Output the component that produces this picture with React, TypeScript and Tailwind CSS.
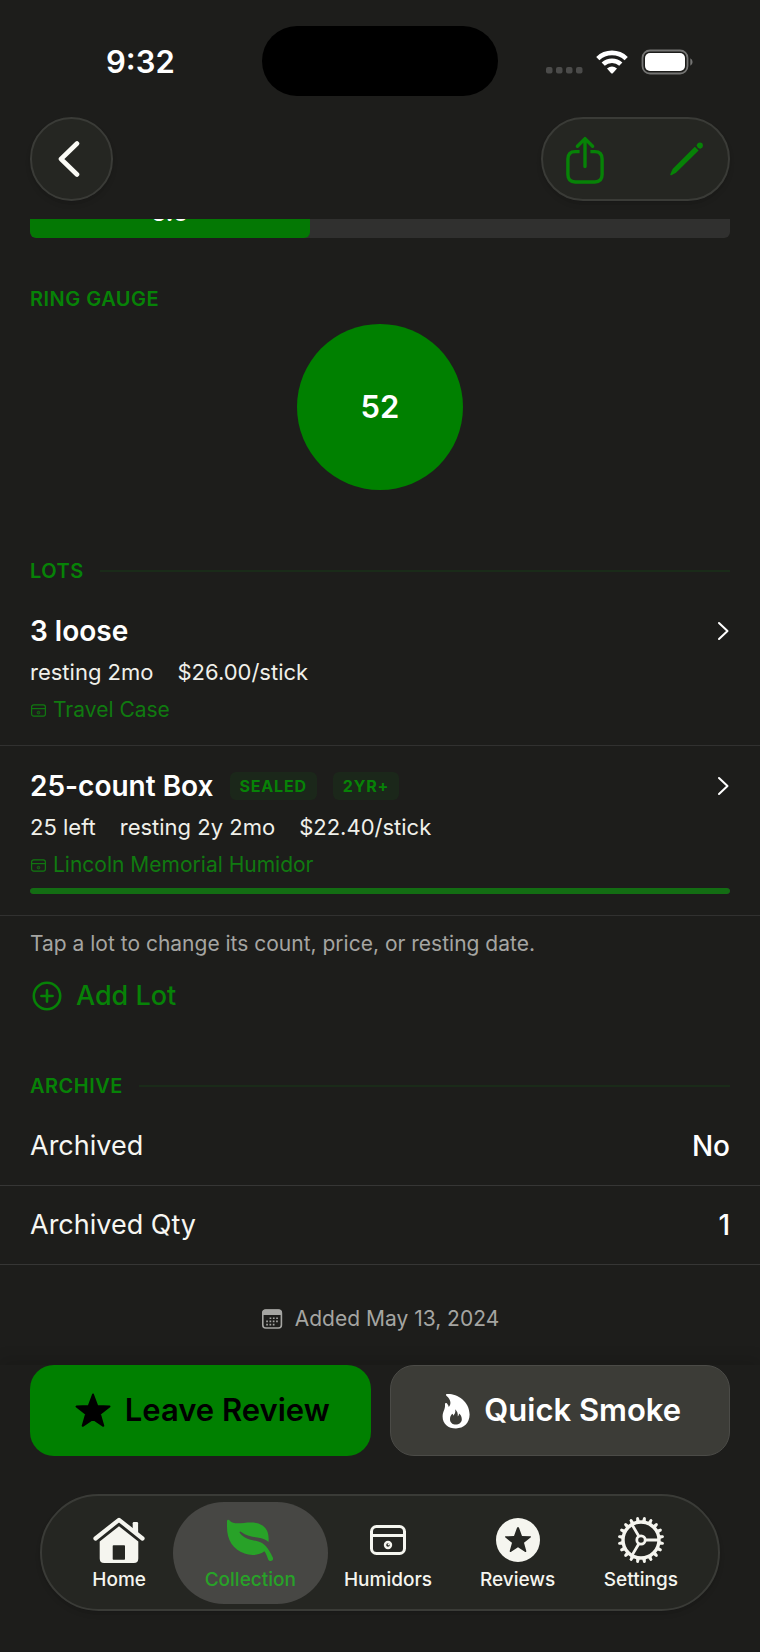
import React, { useState } from 'react';

const lots = [
  {
    title: '3 loose',
    tags: [] as string[],
    facts: ['resting 2mo', '$26.00/stick'],
    humidor: 'Travel Case',
  },
  {
    title: '25-count Box',
    tags: ['SEALED', '2YR+'],
    facts: ['25 left', 'resting 2y 2mo', '$22.40/stick'],
    humidor: 'Lincoln Memorial Humidor',
    remaining: 100,
  },
];

const archive = [
  { label: 'Archived', value: 'No' },
  { label: 'Archived Qty', value: '1' },
];

const STAR = 'M18 1.5 L22.3 13 L34.5 13.5 L24.9 21 L28.3 32.8 L18 26 L7.7 32.8 L11.1 21 L1.5 13.5 L13.7 13 Z';

function HumidorIcon({ className, strokeWidth = 3 }: { className: string; strokeWidth?: number }) {
  return (
    <svg viewBox="0 0 36 30" fill="none" className={className} stroke="currentColor" strokeWidth={strokeWidth}>
      <rect x="1.5" y="1.5" width="33" height="27" rx="5" />
      <path d="M1.5 10.5H34.5" />
      <circle cx="18" cy="20" r="3" strokeWidth="2.4" />
      <path d="M18 20L19.6 18.4" strokeWidth="1.4" />
    </svg>
  );
}

function HomeIcon() {
  return (
    <svg viewBox="0 0 52 46" className="w-[52px] h-[46px]" fill="currentColor">
      <path d="M2.5 21.5L26 2.8L49.5 21.5" fill="none" stroke="currentColor" strokeWidth="4.2" strokeLinecap="round" strokeLinejoin="round" />
      <path d="M39.7 12V6.2Q39.7 5 40.9 5H43.9Q45.1 5 45.1 6.2V17Z" />
      <path fillRule="evenodd" d="M26 9.2L45.3 24.6V41.5Q45.3 46 40.8 46H11.2Q6.7 46 6.7 41.5V24.6ZM20.5 28.2Q19.7 28.2 19.7 29V42Q19.7 42.8 20.5 42.8H31.2Q32 42.8 32 42V29Q32 28.2 31.2 28.2Z" />
    </svg>
  );
}

function LeafIcon() {
  return (
    <svg viewBox="0 0 48 42" className="w-[48px] h-[42px]" fill="currentColor">
      <path d="M1 2.3C1 .6 2.6.3 3.6 1.5C6.4 4.8 11.5 4.6 18 4C25 3.4 31.5 3 36.5 6.6C41.5 10.2 43.2 15.5 42.5 23C40.8 21.2 38.2 19.8 34.2 18.9C29 17.8 22 18.2 14.8 12.8C14 12.2 13.2 13.2 13.8 14C18.6 20.4 25.6 20.8 31.4 22.2C38.2 23.8 42.2 28.4 46.8 38.5C48.2 41.8 43.6 43.2 42.2 40.4C41 37.6 40.4 35 38.4 32.3C33.6 36.4 25 37 18.6 34.6C7 30.6 1 21 1 8Z" />
    </svg>
  );
}

function ReviewsIcon() {
  return (
    <svg viewBox="0 0 44 44" className="w-[44px] h-[44px]" fill="currentColor">
      <path
        fillRule="evenodd"
        strokeLinejoin="round"
        d="M22 0A22 22 0 1 1 22 44A22 22 0 1 1 22 0ZM21 9.8L18 18L9.6 18.3Q8.4 18.6 9.4 19.6L16 24.8L13.7 33.1Q13.6 34.5 14.8 33.9L22 29.2L29.2 33.9Q30.4 34.5 30.3 33.1L28 24.8L34.6 19.6Q35.6 18.6 34.4 18.3L26 18L23 9.8Q22 8.4 21 9.8Z"
      />
    </svg>
  );
}

function SettingsIcon() {
  const teeth = Array.from({ length: 20 }, (_, i) => i * 18 + 9);
  return (
    <svg viewBox="0 0 48 48" className="w-[48px] h-[48px]" fill="none" stroke="currentColor">
      <circle cx="24" cy="24" r="18" strokeWidth="3.4" />
      {teeth.map((deg) => (
        <path key={deg} d="M22 6L22.7 1.4Q24 0 25.3 1.4L26 6Z" fill="currentColor" stroke="none" transform={`rotate(${deg} 24 24)`} />
      ))}
      <circle cx="24" cy="24" r="4.2" strokeWidth="2.8" />
      <path d="M28.5 24H41.5M21.7 20L15 8.6M21.7 28L15 39.4" strokeWidth="2.8" />
    </svg>
  );
}

const tabs = [
  { name: 'Home', icon: <HomeIcon /> },
  { name: 'Collection', icon: <LeafIcon /> },
  { name: 'Humidors', icon: <HumidorIcon className="w-[36px] h-[30px]" /> },
  { name: 'Reviews', icon: <ReviewsIcon /> },
  { name: 'Settings', icon: <SettingsIcon /> },
];

function StatusBar() {
  return (
    <div className="grid grid-cols-[1fr_236px_1fr] h-[117px] pt-[26px] items-start">
      <div className="h-[72px] flex items-center pl-[106px] text-[31px] font-semibold">9:32</div>
      <div className="h-[70px] rounded-full bg-black" />
      <div className="h-[72px] flex items-center justify-end pr-[67px] gap-[13px]">
        <svg viewBox="0 0 37 24" className="w-[37px] h-[24px]" fill="#4b4b4a">
          <rect x="0" y="17" width="6.5" height="6.5" rx="2" />
          <rect x="10" y="17" width="6.5" height="6.5" rx="2" />
          <rect x="20" y="17" width="6.5" height="6.5" rx="2" />
          <rect x="30" y="17" width="6.5" height="6.5" rx="2" />
        </svg>
        <svg viewBox="0 0 32 24" className="w-[32px] h-[24px]" fill="none" stroke="#fff" strokeWidth="4.6">
          <path d="M1.8 8.6A20.5 20.5 0 0 1 30.2 8.6" />
          <path d="M7.2 14.2A12.8 12.8 0 0 1 24.8 14.2" />
          <path d="M11 18.6Q16 14.6 21 18.6L16.8 23.2Q16 24 15.2 23.2Z" fill="#fff" stroke="none" />
        </svg>
        <svg viewBox="0 0 52 26" className="w-[52px] h-[26px]" fill="none">
          <rect x="1.5" y="1.5" width="45" height="23" rx="7.5" stroke="#747473" strokeWidth="1.8" />
          <rect x="4" y="4" width="40" height="18" rx="5" fill="#fff" />
          <path d="M49.3 9.2Q51.6 10.4 51.6 13Q51.6 15.6 49.3 16.8Z" fill="#747473" />
        </svg>
      </div>
    </div>
  );
}

function NavBar() {
  return (
    <div className="flex justify-between px-[30px] h-[102px] items-start">
      <button type="button" aria-label="Back" className="w-[83px] h-[84px] rounded-full bg-[#252622] border-2 border-[#3a3b37] shadow-md flex items-center justify-center">
        <svg viewBox="0 0 22 36" className="w-[22px] h-[36px] mr-[6px]" fill="none" stroke="#fbfbf6" strokeWidth="4.6" strokeLinecap="round" strokeLinejoin="round">
          <path d="M19 2.5L3 18L19 33.5" />
        </svg>
      </button>
      <div className="w-[189px] h-[84px] rounded-full bg-[#252622] border-2 border-[#3a3b37] shadow-md flex items-center justify-between pl-[23px] pr-[23px] text-[#078207]">
        <button type="button" aria-label="Share">
          <svg viewBox="0 -2 38 50" className="w-[38px] h-[50px]" fill="none" stroke="currentColor" strokeWidth="3.4">
            <path d="M13.6 15.6H9.2Q1.9 15.6 1.9 23V38.6Q1.9 46 9.2 46H28.8Q36.1 46 36.1 38.6V23Q36.1 15.6 28.8 15.6H24.4" />
            <path d="M19 2.6V30.6M11.4 10.2L19 2.6L26.6 10.2" strokeLinecap="round" strokeLinejoin="round" />
          </svg>
        </button>
        <button type="button" aria-label="Edit">
          <svg viewBox="0 0 36 36" className="w-[36px] h-[36px]" fill="currentColor">
            <path d="M25.8 5.8L29.6 9.4L7 31.8L2.4 34.2Q.8 34.8 1.4 33L3.6 28Z" />
            <circle cx="31" cy="4.4" r="2.9" />
            <path d="M27.4 4.3L29.4 2.3L33 6L31 7.9Z" />
          </svg>
        </button>
      </div>
    </div>
  );
}

function SectionTitle({ children }: { children: string }) {
  return (
    <div className="flex items-center gap-4 px-[30px]">
      <h2 className="text-xl leading-7 font-semibold tracking-wide text-[#078207]">{children}</h2>
      <div className="flex-1 h-[2px] bg-[#1a2b19]" />
    </div>
  );
}

export default function App() {
  const [active, setActive] = useState('Collection');

  return (
    <div className="w-full min-h-screen bg-[#1d1d1b] text-white font-['Inter',sans-serif]">
      <StatusBar />
      <NavBar />

      {/* length bar, scrolled halfway under the header */}
      <div className="mx-[30px] h-[19px] overflow-hidden flex items-end">
        <div className="w-full h-[50px] shrink-0 rounded-md bg-[#30302f] overflow-hidden">
          <div className="w-2/5 h-full rounded-md bg-[#047804] flex items-center justify-center text-2xl font-semibold">5.0</div>
        </div>
      </div>

      <h2 className="mt-[47px] px-[30px] text-xl leading-7 font-semibold tracking-wide text-[#078207]">RING GAUGE</h2>
      <div className="mt-[11px] mx-auto size-[166px] rounded-full bg-[#008000] flex items-center justify-center text-[31px] font-semibold">52</div>

      <section className="mt-[67px]">
        <SectionTitle>LOTS</SectionTitle>
        <div className="mt-[6px]">
          {lots.map((lot) => (
            <button key={lot.title} type="button" className="block w-full text-left px-[30px] pt-[22px] pb-[21px] border-b border-[#313130]">
              <div className="flex items-center justify-between h-9">
                <div className="flex items-center gap-4">
                  <span className="text-[28px] leading-9 font-semibold">{lot.title}</span>
                  {lot.tags.map((tag) => (
                    <span key={tag} className="px-[10px] h-7 rounded-md bg-[#1b271a] flex items-center text-base font-bold tracking-wider text-[#078207]">{tag}</span>
                  ))}
                </div>
                <svg viewBox="0 0 12 20" className="w-[12px] h-[20px] mr-px" fill="none" stroke="#fff" strokeWidth="2" strokeLinecap="round" strokeLinejoin="round">
                  <path d="M2 2L10.5 10L2 18" />
                </svg>
              </div>
              <div className="mt-[7px] flex gap-6 text-[22px] leading-8 text-[#f0f0ea]">
                {lot.facts.map((fact) => (
                  <span key={fact}>{fact}</span>
                ))}
              </div>
              <div className="mt-2 flex items-center gap-[7px] text-[21px] leading-7 text-[#107a10]">
                <HumidorIcon className="w-[15px] h-[13px] ml-[1px]" strokeWidth={2.8} />
                <span>{lot.humidor}</span>
              </div>
              {lot.remaining && (
                <div className="mt-[9px] h-[6px] rounded-full bg-[#30302f] overflow-hidden">
                  <div className="h-full rounded-full bg-[#136d13]" style={{ width: `${lot.remaining}%` }} />
                </div>
              )}
            </button>
          ))}
        </div>
        <p className="mt-[14px] px-[30px] text-[21px] leading-7 text-[#a5a5a2]">Tap a lot to change its count, price, or resting date.</p>
        <button type="button" className="mt-5 ml-[32px] flex items-center gap-[14px] text-[27px] leading-9 font-medium text-[#078207]">
          <svg viewBox="0 0 30 30" className="w-[30px] h-[30px]" fill="none" stroke="currentColor" strokeWidth="2.6" strokeLinecap="round">
            <circle cx="15" cy="15" r="13.2" />
            <path d="M15 9.4V20.6M9.4 15H20.6" />
          </svg>
          Add Lot
        </button>
      </section>

      <section className="mt-[58px]">
        <SectionTitle>ARCHIVE</SectionTitle>
        <dl className="mt-[7px]">
          {archive.map((row) => (
            <div key={row.label} className="h-[79px] px-[30px] flex items-center justify-between border-b border-[#363635]">
              <dt className="text-[27px] text-[#f6f6f2]">{row.label}</dt>
              <dd className="text-[28px] font-medium">{row.value}</dd>
            </div>
          ))}
        </dl>
      </section>

      <div className="mt-[40px] flex items-center justify-center gap-3 text-[21px] leading-7 text-[#a5a5a2]">
        <svg viewBox="0 0 22 20" className="w-[22px] h-[20px]" fill="none">
          <rect x="1.8" y="1" width="18.6" height="18" rx="3" stroke="currentColor" strokeWidth="1.6" />
          <path d="M1.2 6V4Q1.2.4 4.8.4H17.4Q21 .4 21 4V6Z" fill="currentColor" />
          <path d="M8.6 9.2H18M5.2 12.4H18M5.2 15.6H15" stroke="currentColor" strokeWidth="1.6" strokeDasharray="1.7 1.6" />
        </svg>
        Added May 13, 2024
      </div>

      <footer className="mt-[32px] shadow-[0_-6px_14px_rgba(0,0,0,0.12)]">
        <div className="px-[30px] grid grid-cols-2 gap-[19px] text-[31px] font-semibold">
          <button type="button" className="h-[91px] rounded-3xl bg-[#008000] text-black flex items-center justify-center gap-[14px] pl-1">
            <svg viewBox="0 0 36 35" className="w-[36px] h-[35px]" fill="currentColor" stroke="currentColor" strokeWidth="2" strokeLinejoin="round">
              <path d={STAR} />
            </svg>
            Leave Review
          </button>
          <button type="button" className="h-[91px] rounded-3xl bg-[#3c3c37] border border-[#4b4b47] flex items-center justify-center gap-[14px] pl-1">
            <svg viewBox="0 0 28 36" className="w-[28px] h-[36px]" fill="currentColor">
              <path
                fillRule="evenodd"
                d="M4.8 1C14 .2 27.6 7.6 27.6 21.6C27.6 30.4 21.6 35.4 14 35.4C6.2 35.4.6 30.8.6 23.4C.6 18.6 3.4 16.2 3 11.4C3 10 4 9.6 5 10.4C6 11.4 6.6 12.6 6.8 14C9.6 11 8.8 6.4 4.6 3C3.6 2.2 3.8 1.1 4.8 1ZM13 16.2C14.2 19.4 12.2 21.2 11.4 22.8Q11.2 21.2 10.2 20.8C8.8 22.4 7.9 24 8 26.4C8.2 29.6 10.8 31.6 13.8 31.6C17 31.6 19.8 29.4 19.8 26.2C19.8 23.8 18.6 21.8 17 20.6C17 22 16.6 22.8 15.8 23.4C16 20.4 15.2 17.8 13 16.2Z"
              />
            </svg>
            Quick Smoke
          </button>
        </div>

        <div className="pt-[38px] pb-[40px] px-[40px]">
          <nav className="h-[117px] rounded-full bg-[#252622] border-2 border-[#3a3b37] shadow-md flex items-center justify-center">
            {tabs.map((tab) => (
              <button
                key={tab.name}
                type="button"
                onClick={() => setActive(tab.name)}
                className={`h-[102px] rounded-full flex flex-col items-center text-[19px] font-medium ${
                  active === tab.name ? 'px-8 -mx-2 bg-[#474744] text-[#28a228]' : 'px-6 min-w-[123px] text-[#f5f5ef]'
                }`}
              >
                <span className="h-[48px] mt-[14px] flex items-center">{tab.icon}</span>
                <span className="mt-[4px] leading-6">{tab.name}</span>
              </button>
            ))}
          </nav>
        </div>
      </footer>
    </div>
  );
}
